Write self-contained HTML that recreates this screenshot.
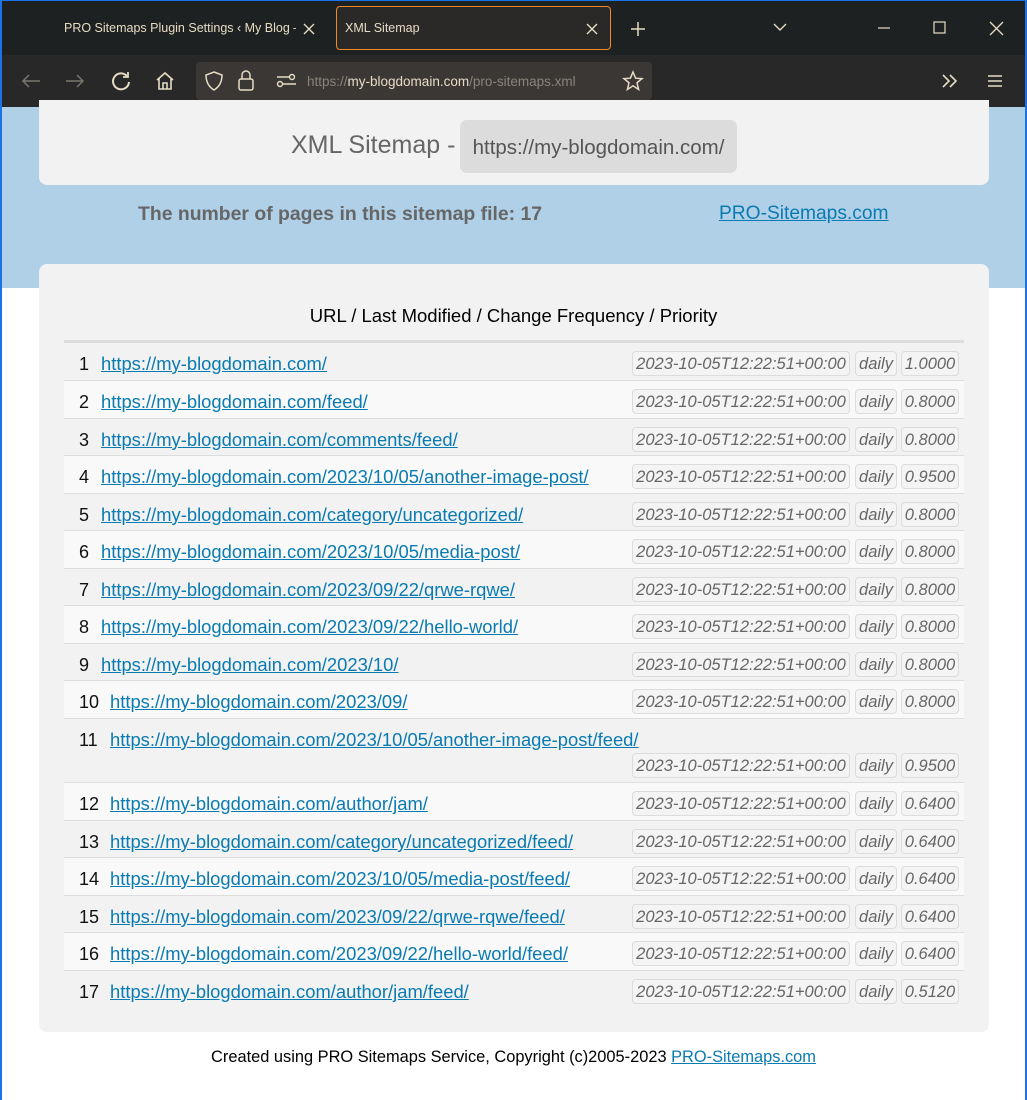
<!DOCTYPE html>
<html><head><meta charset="utf-8"><style>
*{box-sizing:border-box;margin:0;padding:0}
body{width:1027px;height:1100px;overflow:hidden;font-family:"Liberation Sans",Arial,sans-serif;background:#fff;position:relative}
.win{position:absolute;inset:0;border:1px solid #1a73e8;border-width:1px 2px 0 2px;pointer-events:none;z-index:9}
.title{position:absolute;left:0;top:0;width:1027px;height:55px;background:#1e2121}
.tool{position:absolute;left:0;top:55px;width:1027px;height:52px;background:#282828}
.tab1{position:absolute;left:64px;top:21px;color:#e6dcc4;font-size:12.5px;white-space:nowrap;width:232px;overflow:hidden}
.tab2{position:absolute;left:336px;top:6px;width:275px;height:44px;border:1px solid #f08a24;border-radius:4px;background:#2a2927}
.tab2 span{position:absolute;left:8px;top:14px;color:#e6dcc4;font-size:12.5px}
.url{position:absolute;left:196px;top:62px;width:456px;height:38px;background:#3a3735;border-radius:4px}
.url .t{position:absolute;left:111px;top:12px;font-size:13.5px;color:#8a847a}
.url .t b{font-weight:normal;color:#e6dcc4}
svg{position:absolute}
.blue{position:absolute;left:0;top:107px;width:1027px;height:181px;background:#b0d0e8}
.card{position:absolute;left:39px;width:950px;background:#f2f2f2;border-radius:8px}
a{color:#0a7bb2;text-decoration:underline}
.row{position:absolute;left:64px;width:900px;border-bottom:1px solid #dedede}
.row .n{position:absolute;left:15px;top:11px;font-size:18px;color:#111}
.row a{position:absolute;top:10px;font-size:18.4px;white-space:nowrap}
.b{position:absolute;border:1px solid #dcdcdc;border-radius:4px;background:#f4f4f4;color:#666;font-style:italic;font-size:16.5px;height:25px;line-height:24px;text-align:center}
</style></head><body>
<div class="win"></div>
<div class="title"></div>
<div class="tool"></div>
<div class="tab1">PRO Sitemaps Plugin Settings ‹ My Blog — W</div>
<svg style="left:302px;top:22px" width="14" height="14" stroke="#e6dcc4" stroke-width="1.4"><path d="M2 2L12 12M12 2L2 12"/></svg>
<div class="tab2"><span>XML Sitemap</span></div>
<svg style="left:585px;top:22px" width="14" height="14" stroke="#e6dcc4" stroke-width="1.4"><path d="M2 2L12 12M12 2L2 12"/></svg>
<svg style="left:630px;top:21px" width="16" height="16" stroke="#e6dcc4" stroke-width="1.5"><path d="M8 1V15M1 8H15"/></svg>
<svg style="left:772px;top:22px" width="16" height="12" stroke="#e6dcc4" stroke-width="1.4" fill="none"><path d="M2 2L8 8L14 2"/></svg>
<svg style="left:877px;top:27px" width="14" height="4" stroke="#e6dcc4" stroke-width="1.2"><path d="M1 1H13"/></svg>
<svg style="left:933px;top:21px" width="14" height="14" stroke="#e6dcc4" stroke-width="1.2" fill="none"><rect x="1" y="1" width="11" height="11"/></svg>
<svg style="left:989px;top:21px" width="15" height="15" stroke="#e6dcc4" stroke-width="1.3"><path d="M1 1L14 14M14 1L1 14"/></svg>
<svg style="left:20px;top:72px" width="22" height="18" stroke="#7a766e" stroke-width="1.5" fill="none"><path d="M20 9H3M9 3L3 9L9 15"/></svg>
<svg style="left:64px;top:72px" width="22" height="18" stroke="#7a766e" stroke-width="1.5" fill="none"><path d="M2 9H19M13 3L19 9L13 15"/></svg>
<svg style="left:110px;top:70px" width="22" height="22" stroke="#e6dcc4" stroke-width="2" fill="none"><path d="M17 6A8 8 0 1 0 19 12"/><path d="M18 2V7H13" stroke-width="1.8"/></svg>
<svg style="left:154px;top:70px" width="22" height="22" stroke="#e6dcc4" stroke-width="1.6" fill="none"><path d="M3 10L11 3L19 10M5 8V19H17V8M9 19V13H13V19"/></svg>
<div class="url"><span class="t">https://<b>my-blogdomain.com</b>/pro-sitemaps.xml</span></div>
<svg style="left:204px;top:70px" width="20" height="22" stroke="#e6dcc4" stroke-width="1.5" fill="none"><path d="M10 2L18 5C18 12 15 17 10 20C5 17 2 12 2 5Z"/></svg>
<svg style="left:237px;top:69px" width="18" height="24" stroke="#e6dcc4" stroke-width="1.5" fill="none"><rect x="2" y="10" width="14" height="11" rx="2"/><path d="M5 10V6A4 4 0 0 1 13 6V10"/></svg>
<svg style="left:276px;top:73px" width="22" height="16" stroke="#e6dcc4" stroke-width="1.4" fill="none"><circle cx="4" cy="11" r="2.5"/><circle cx="16" cy="4" r="2.5"/><path d="M1 4H13M7 11H20"/></svg>
<svg style="left:622px;top:70px" width="22" height="22" stroke="#e6dcc4" stroke-width="1.5" fill="none"><path d="M11 2L13.6 8.2L20 8.6L15 12.8L16.6 19.5L11 15.8L5.4 19.5L7 12.8L2 8.6L8.4 8.2Z"/></svg>
<svg style="left:940px;top:72px" width="20" height="18" stroke="#e6dcc4" stroke-width="1.6" fill="none"><path d="M3 3L9 9L3 15M10 3L16 9L10 15"/></svg>
<svg style="left:986px;top:72px" width="18" height="18" stroke="#e6dcc4" stroke-width="1.5"><path d="M2 4H16M2 9H16M2 14H16"/></svg>

<div class="blue"></div>
<div class="card" style="top:100px;height:85px;border-radius:0 0 8px 8px"></div>
<div style="position:absolute;left:291px;top:131px;font-size:25px;color:#666;white-space:nowrap">XML Sitemap -</div>
<div style="position:absolute;left:460px;top:120px;width:277px;height:53px;background:#dcdcdc;border-radius:7px;font-size:20.5px;color:#555;line-height:55px;text-align:center;white-space:nowrap">https://my-blogdomain.com/</div>
<div style="position:absolute;left:138px;top:203px;font-size:19.4px;font-weight:bold;color:#666;white-space:nowrap">The number of pages in this sitemap file: 17</div>
<a style="position:absolute;left:719px;top:203px;font-size:19.2px;white-space:nowrap">PRO-Sitemaps.com</a>

<div class="card" style="top:264px;height:768px"></div>
<div style="position:absolute;left:0;width:1027px;top:305px;text-align:center;font-size:18.5px;color:#000">URL / Last Modified / Change Frequency / Priority</div>
<div style="position:absolute;left:64px;top:340px;width:900px;height:3px;background:#dcdcdc"></div>

<div id="rows"></div>
<script>
var urls=["https://my-blogdomain.com/","https://my-blogdomain.com/feed/","https://my-blogdomain.com/comments/feed/","https://my-blogdomain.com/2023/10/05/another-image-post/","https://my-blogdomain.com/category/uncategorized/","https://my-blogdomain.com/2023/10/05/media-post/","https://my-blogdomain.com/2023/09/22/qrwe-rqwe/","https://my-blogdomain.com/2023/09/22/hello-world/","https://my-blogdomain.com/2023/10/","https://my-blogdomain.com/2023/09/","https://my-blogdomain.com/2023/10/05/another-image-post/feed/","https://my-blogdomain.com/author/jam/","https://my-blogdomain.com/category/uncategorized/feed/","https://my-blogdomain.com/2023/10/05/media-post/feed/","https://my-blogdomain.com/2023/09/22/qrwe-rqwe/feed/","https://my-blogdomain.com/2023/09/22/hello-world/feed/","https://my-blogdomain.com/author/jam/feed/"];
var pr=["1.0000","0.8000","0.8000","0.9500","0.8000","0.8000","0.8000","0.8000","0.8000","0.8000","0.9500","0.6400","0.6400","0.6400","0.6400","0.6400","0.5120"];
var ys=[343,381,419,456,494,531,569,606,644,681,719,783,821,858,896,933,971,1008];
var h="";
for(var i=0;i<17;i++){var y=ys[i],ht=ys[i+1]-y,bg=(i%2)?"#f9f9f9":"#f2f2f2";
var ax=i<9?101:110;var by=(i==10)?y+34:y+8;
h+='<div class="row" style="top:'+y+'px;height:'+ht+'px;background:'+bg+(i==16?';border:none':'')+'"><span class="n">'+(i+1)+'</span><a style="left:'+(ax-64)+'px">'+urls[i]+'</a></div>';
h+='<div class="b" style="left:632px;top:'+by+'px;width:218px">2023-10-05T12:22:51+00:00</div><div class="b" style="left:855px;top:'+by+'px;width:42px">daily</div><div class="b" style="left:901px;top:'+by+'px;width:58px">'+pr[i]+'</div>';}
document.getElementById("rows").innerHTML=h;
</script>
<div style="position:absolute;left:0;width:1027px;top:1048px;text-align:center;font-size:16.4px;color:#000">Created using PRO Sitemaps Service, Copyright (c)2005-2023 <a>PRO-Sitemaps.com</a></div>
</body></html>
